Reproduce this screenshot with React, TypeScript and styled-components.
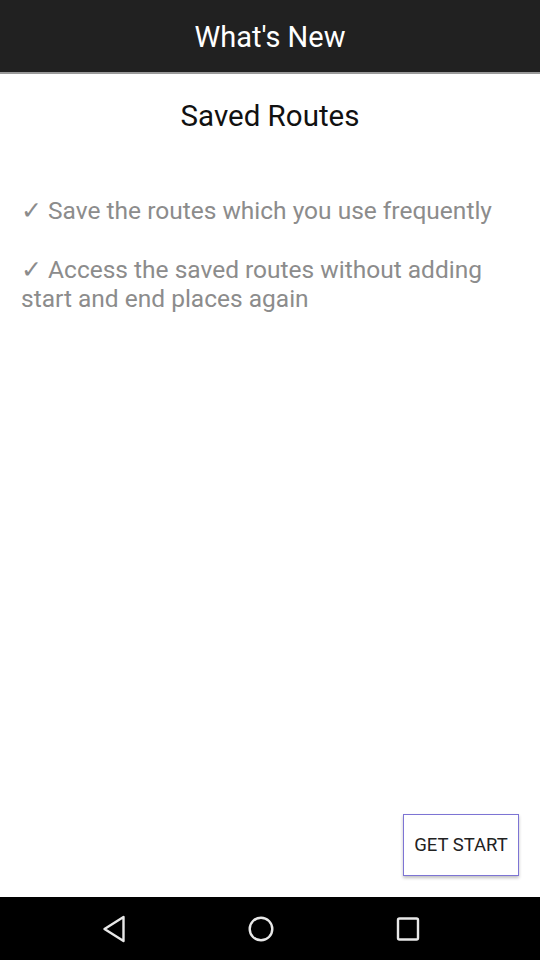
import React from "react";
import styled, { createGlobalStyle } from "styled-components";

const Global = createGlobalStyle`
  html, body { margin: 0; padding: 0; background: #fff; }
  body { font-family: Roboto, "Noto Sans", sans-serif; }
  * { box-sizing: border-box; }
`;

const Screen = styled.div`
  width: 540px;
  height: 960px;
  display: flex;
  flex-direction: column;
  background: #fff;
`;

const Header = styled.header`
  height: 74px;
  flex: none;
  background: #212121;
  border-bottom: 2px solid #9a9a9a;
  display: flex;
  align-items: center;
  justify-content: center;
  color: #fff;
  font-size: 29px;
  padding-top: 1px;
`;

const Content = styled.main`
  flex: 1;
  display: flex;
  flex-direction: column;
  padding: 0 21px 21px;
`;

const Title = styled.h1`
  margin: 26px 0 0;
  text-align: center;
  font-weight: 400;
  font-size: 29.5px;
  line-height: 32px;
  color: #111;
`;

const List = styled.div`
  margin-top: 64px;
  display: flex;
  flex-direction: column;
  gap: 30px;
`;

const Item = styled.p`
  margin: 0;
  font-size: 24.5px;
  line-height: 29px;
  color: #8c8c8c;
`;

const Spacer = styled.div`
  flex: 1;
`;

const ButtonRow = styled.div`
  display: flex;
  justify-content: flex-end;
`;

const Button = styled.button`
  width: 116px;
  height: 62px;
  background: #fff;
  border: 1px solid #7d74d4;
  box-shadow: 0 2px 3px rgba(0, 0, 0, 0.25);
  font-family: Roboto, sans-serif;
  font-size: 18.5px;
  color: #222;
  padding: 0;
`;

const NavBar = styled.nav`
  height: 63px;
  flex: none;
  background: #000;
  display: flex;
  align-items: center;
  justify-content: center;
  gap: 117px;
  padding-right: 18px;
`;

const NavIcon = styled.svg`
  width: 30px;
  height: 30px;
  display: block;
`;

export default function App() {
  return (
    <Screen>
      <Global />
      <Header>What's New</Header>
      <Content>
        <Title>Saved Routes</Title>
        <List>
          <Item>✓ Save the routes which you use frequently</Item>
          <Item>✓ Access the saved routes without adding start and end places again</Item>
        </List>
        <Spacer />
        <ButtonRow>
          <Button>GET START</Button>
        </ButtonRow>
      </Content>
      <NavBar>
        <NavIcon viewBox="0 0 30 30">
          <path d="M24.5 3 L24.5 27 L5.5 15 Z" fill="none" stroke="#e8e8e8" strokeWidth="2.4" strokeLinejoin="round" />
        </NavIcon>
        <NavIcon viewBox="0 0 30 30">
          <circle cx="15" cy="15" r="11.3" fill="none" stroke="#e8e8e8" strokeWidth="2.4" />
        </NavIcon>
        <NavIcon viewBox="0 0 30 30">
          <rect x="5" y="4.5" width="20" height="21" rx="1.5" fill="none" stroke="#e8e8e8" strokeWidth="2.4" />
        </NavIcon>
      </NavBar>
    </Screen>
  );
}
